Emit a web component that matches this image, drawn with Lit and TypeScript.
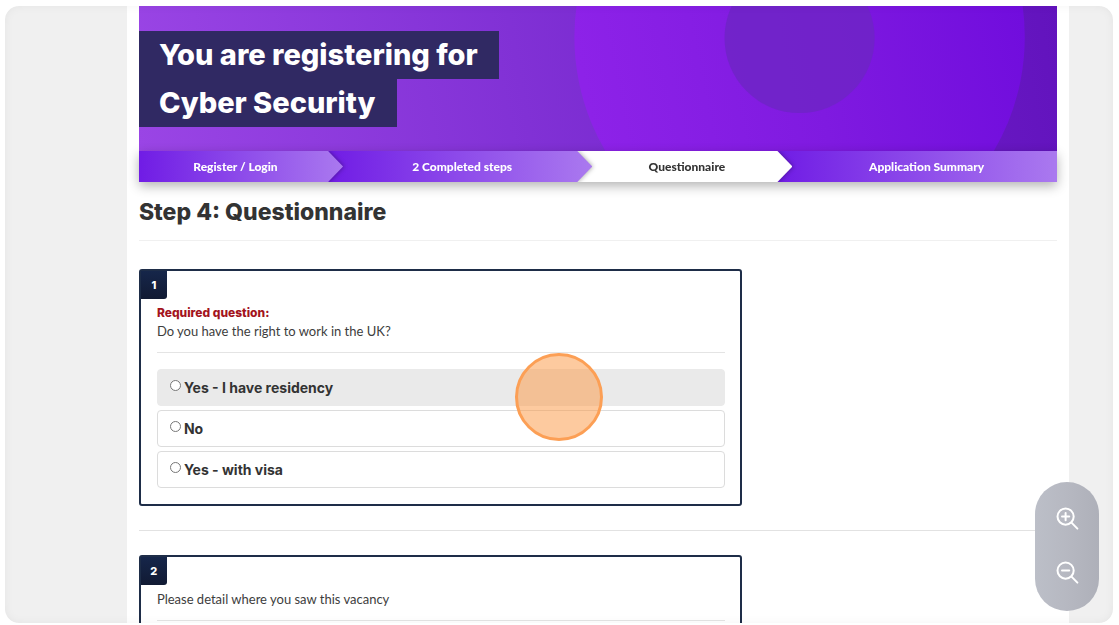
import { LitElement, html, css, svg, nothing } from "lit";
import { customElement, property } from "lit/decorators.js";
import { classMap } from "lit/directives/class-map.js";

interface Step {
  label: string;
  width: number;
  current?: boolean;
}

const STEPS: Step[] = [
  { label: "Register / Login", width: 204 },
  { label: "2 Completed steps", width: 249 },
  { label: "Questionnaire", width: 200, current: true },
  { label: "Application Summary", width: 264 },
];

@customElement("hero-banner")
class HeroBanner extends LitElement {
  static styles = css`
    :host {
      display: block;
      position: relative;
      padding: 25px 0 24px;
      background: linear-gradient(80deg, #9a45e5 0%, #7c2dd2 50%, #6c1cc6 80%, #6213bd 100%);
    }
    .art {
      position: absolute;
      inset: 0;
      width: 100%;
      height: 100%;
    }
    .title {
      position: relative;
      display: flex;
      flex-direction: column;
      align-items: flex-start;
      margin: 0;
      font-size: 29px;
      line-height: 48px;
      font-weight: 800;
      color: #fff;
    }
    .line {
      padding: 0 21px 0 20px;
      background: #302963;
    }
  `;

  render() {
    return html`
      <svg class="art" viewBox="0 0 917 145" preserveAspectRatio="xMaxYMin slice" aria-hidden="true">
        <defs>
          <linearGradient id="disc" x1="0" y1="0.5" x2="1" y2="0.3">
            <stop offset="0" stop-color="#8d22e8" />
            <stop offset="0.5" stop-color="#7f1ae0" />
            <stop offset="1" stop-color="#700cdd" />
          </linearGradient>
        </defs>
        <circle cx="660" cy="31" r="225" fill="url(#disc)" />
        <circle cx="660" cy="32" r="75" fill="#6e24c6" fill-opacity="0.85" />
      </svg>
      <h1 class="title">
        <span class="line">You are registering for</span>
        <span class="line">Cyber Security</span>
      </h1>
    `;
  }
}

@customElement("step-bar")
class StepBar extends LitElement {
  static styles = css`
    :host {
      display: block;
      position: relative;
      box-shadow: 0 4px 12px rgba(0, 0, 0, 0.3);
    }
    .steps {
      display: flex;
      margin: 0;
      padding: 0;
      list-style: none;
      overflow: hidden;
    }
    .step {
      display: flex;
      min-width: 0;
      position: relative;
      filter: drop-shadow(1px 0 2px rgba(0, 0, 0, 0.3));
    }
    .step:nth-child(1) { z-index: 4; }
    .step:nth-child(2) { z-index: 3; }
    .step:nth-child(3) { z-index: 2; }
    .step:nth-child(4) { z-index: 1; }
    .link {
      flex: 1;
      padding: 0 15px 0 4px;
      font-family: Lato, "Liberation Sans", sans-serif;
      font-size: 12px;
      line-height: 31px;
      font-weight: 900;
      text-align: center;
      white-space: nowrap;
      color: #fff;
      text-decoration: none;
      background: linear-gradient(90deg, #701ce5, #aa79ef);
      clip-path: polygon(0 0, calc(100% - 15px) 0, 100% 50%, calc(100% - 15px) 100%, 0 100%);
    }
    .step + .step .link {
      margin-left: -15px;
      padding-left: 19px;
    }
    .step:last-child .link {
      padding-right: 0;
      clip-path: none;
    }
    .link.current {
      color: #333;
      background: #fff;
    }
  `;

  render() {
    return html`
      <ol class="steps">
        ${STEPS.map(
          (s) => html`<li class="step" style="flex:${s.width} 1 0px">
            <a
              class=${classMap({ link: true, current: !!s.current })}
              href="#"
              aria-current=${s.current ? "step" : nothing}
              >${s.label}</a
            >
          </li>`
        )}
      </ol>
    `;
  }
}

@customElement("question-card")
class QuestionCard extends LitElement {
  @property({ type: Number }) number = 1;
  @property() text = "";
  @property({ type: Boolean }) required = false;
  @property({ attribute: false }) options: string[] = [];

  static styles = css`
    :host {
      display: block;
      box-sizing: border-box;
      max-width: 603px;
      border: 2px solid #1e2d48;
      border-radius: 3px;
      color: #3d3d3d;
    }
    .badge {
      display: inline-block;
      box-sizing: border-box;
      min-width: 26px;
      padding: 0 9px;
      border-radius: 0 0 3px 0;
      background: linear-gradient(#16264a, #111a33);
      color: #fff;
      font-size: 11px;
      line-height: 28px;
      font-weight: 800;
      text-align: center;
      vertical-align: top;
    }
    .group {
      margin: 0;
      padding: 5px 15px 16px 16px;
      border: 0;
      min-width: 0;
    }
    .legend {
      box-sizing: border-box;
      width: 100%;
      padding: 0 0 12px;
      border-bottom: 1px solid #e4e4e4;
      font-family: Lato, "Liberation Sans", sans-serif;
      font-size: 13px;
      line-height: 18px;
      float: left;
    }
    .required {
      display: block;
      font-family: Inter, "Liberation Sans", sans-serif;
      font-size: 12px;
      font-weight: 800;
      color: #a3141d;
    }
    .options {
      clear: both;
      display: grid;
      gap: 4px;
      padding-top: 16px;
    }
    .option {
      display: flex;
      align-items: center;
      gap: 3px;
      padding: 0 12px;
      border: 1px solid #dcdcdc;
      border-radius: 4px;
      font-size: 14px;
      line-height: 35px;
      font-weight: 700;
      color: #333;
    }
    .option.hovered {
      background: #eaeaea;
      border-color: #eaeaea;
    }
    .radio {
      appearance: none;
      flex: none;
      width: 11px;
      height: 11px;
      margin: 0 0 4px;
      border: 1px solid #777;
      border-radius: 50%;
      background: #fff;
    }
    .radio:checked {
      border: 3px solid #1a6fe0;
    }
  `;

  render() {
    return html`
      <span class="badge">${this.number}</span>
      <fieldset class="group">
        <legend class="legend">
          ${this.required ? html`<span class="required">Required question:</span>` : nothing}
          ${this.text}
        </legend>
        <div class="options">
          ${this.options.map(
            (o, i) => html`<label class=${classMap({ option: true, hovered: i === 0 })}>
              <input class="radio" type="radio" name="q${this.number}" value=${o} />${o}
            </label>`
          )}
        </div>
      </fieldset>
    `;
  }
}

@customElement("zoom-controls")
class ZoomControls extends LitElement {
  static styles = css`
    :host {
      display: flex;
      flex-direction: column;
      box-sizing: border-box;
      width: 64px;
      padding: 10px 0 11px;
      border-radius: 32px;
      background: linear-gradient(90deg, #bcbfc8, #b6b8c1 50%, #aeb0b9);
    }
    .button {
      display: grid;
      place-items: center;
      height: 54px;
      padding: 0;
      border: 0;
      background: none;
    }
    .icon {
      width: 24px;
      height: 24px;
      fill: none;
      stroke: #fff;
      stroke-width: 2;
      stroke-linecap: round;
    }
  `;

  private glass(plus: boolean) {
    return html`<svg class="icon" viewBox="0 0 24 24" aria-hidden="true">
      <circle cx="10.6" cy="9.6" r="8.1" />
      <path d="M16.5 15.6 L22.4 21.6" />
      <path d="M7 9.6 H14.2" />
      ${plus ? svg`<path d="M10.6 6 V13.2" />` : nothing}
    </svg>`;
  }

  render() {
    return html`
      <button class="button" type="button" aria-label="Zoom in">${this.glass(true)}</button>
      <button class="button" type="button" aria-label="Zoom out">${this.glass(false)}</button>
    `;
  }
}

@customElement("app-root")
class AppRoot extends LitElement {
  static styles = css`
    :host {
      display: block;
      box-sizing: border-box;
      height: 100vh;
      padding: 6px 6px 2px 5px;
      background: #fff;
      font-family: Inter, "Liberation Sans", sans-serif;
    }
    .frame {
      position: relative;
      height: 100%;
      overflow: hidden;
      border-radius: 14px;
      background: #f0f0f0;
    }
    .page {
      box-sizing: border-box;
      min-height: 100%;
      margin: 0 4% 0 11%;
      padding: 0 12px;
      background: #fff;
    }
    .heading {
      margin: 0;
      padding: 15px 0 13px;
      border-bottom: 1px solid #f0f0f0;
      font-size: 23px;
      line-height: 30px;
      font-weight: 800;
      color: #333;
    }
    .questions {
      padding-top: 28px;
    }
    .rule {
      margin: 24px 0;
      border: 0;
      border-top: 1px solid #e2e2e2;
    }
    .pointer {
      position: absolute;
      left: 510px;
      top: 347px;
      box-sizing: border-box;
      width: 88px;
      height: 88px;
      border: 3px solid #fc9f55;
      border-radius: 50%;
      background: rgba(251, 149, 64, 0.5);
      pointer-events: none;
    }
    .zoom {
      position: absolute;
      right: 14px;
      bottom: 12px;
    }
    .shade {
      position: absolute;
      inset: 0;
      border-radius: 14px;
      box-shadow: inset 0 0 10px rgba(0, 0, 0, 0.05);
      pointer-events: none;
    }
  `;

  render() {
    return html`
      <div class="frame">
        <main class="page">
          <hero-banner></hero-banner>
          <step-bar></step-bar>
          <h2 class="heading">Step 4: Questionnaire</h2>
          <div class="questions">
            <question-card
              .number=${1}
              .required=${true}
              .text=${"Do you have the right to work in the UK?"}
              .options=${["Yes - I have residency", "No", "Yes - with visa"]}
            ></question-card>
            <hr class="rule" />
            <question-card .number=${2} .text=${"Please detail where you saw this vacancy"}></question-card>
          </div>
        </main>
        <div class="pointer"></div>
        <zoom-controls class="zoom"></zoom-controls>
        <div class="shade"></div>
      </div>
    `;
  }
}
